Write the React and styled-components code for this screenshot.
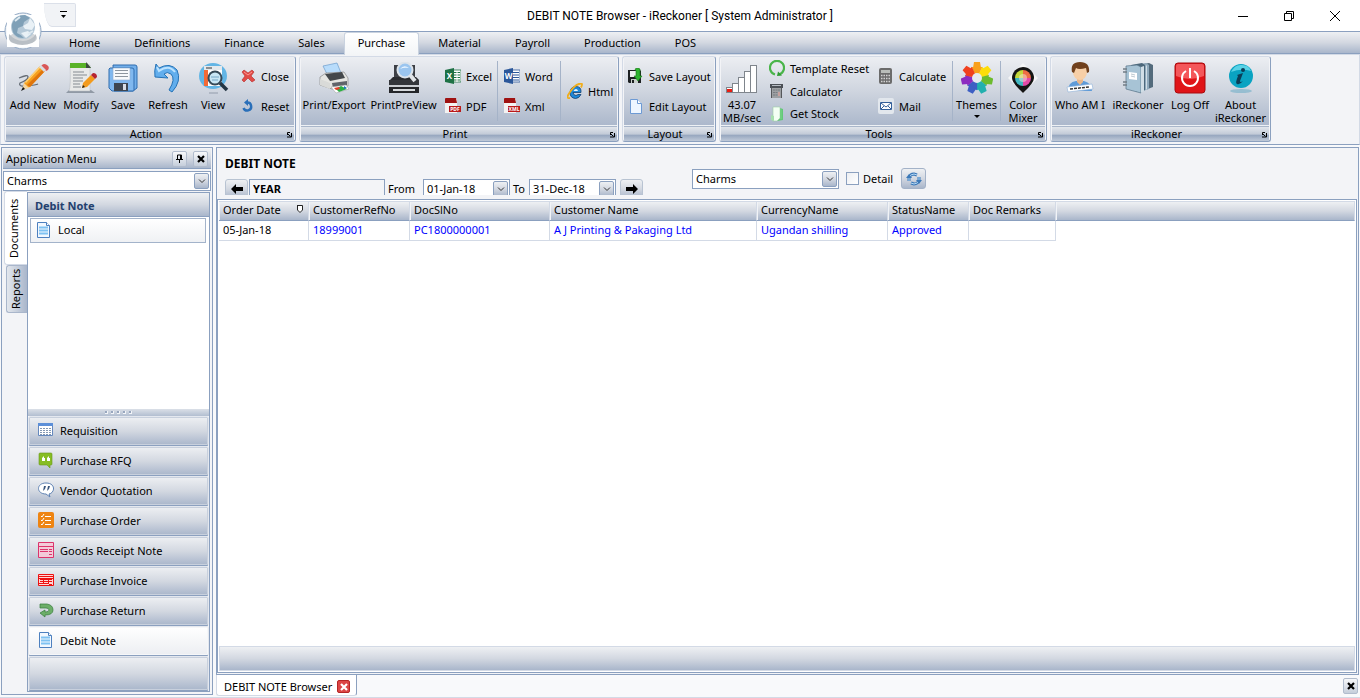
import React from 'react';
import styled, { createGlobalStyle } from 'styled-components';

const line = '#8ba0bf';
const soft = '#d3dae6';
const steel = 'linear-gradient(#eef0f3 0%, #d3d8e1 50%, #a9b6cb 100%)';

const GlobalStyle = createGlobalStyle`
	* {
		box-sizing: border-box;
	}
	html, body, #root {
		height: 100%;
	}
	body {
		margin: 0;
		background: #f8f9fb;
		color: #000;
		font: 11px/13px "Noto Sans", "Open Sans", sans-serif;
	}
	button, input, select {
		font: inherit;
		color: inherit;
		margin: 0;
		padding: 0;
	}
	button {
		background: none;
		border: 0;
		white-space: nowrap;
	}
	svg {
		display: block;
		flex: none;
	}
`

/* icons */

const Svg = ({ size = 16, box = 16, children }) => (
	<svg width={size} height={size} viewBox={`0 0 ${box} ${box}`} aria-hidden="true">{children}</svg>
)

const Big = ({ children }) => <Svg size={32} box={32}>{children}</Svg>

const GlobeLogo = () => (
	<Svg size={38} box={38}>
		<circle cx="19" cy="19" r="18" fill="#f4f7fa" stroke="#8fa6c2" />
		<rect x="3" y="3" width="32" height="32" fill="#fff" />
		<ellipse cx="19" cy="26" rx="14" ry="6" fill="#d3d6d9" />
		<path d="M5 22q-1 8 4 9 9 4 19 0 5-2 4-9-5 7-13 7T5 22z" fill="#b9bfc5" />
		<circle cx="19" cy="15" r="12" fill="#b5c9d8" />
		<path d="M8 12Q11 3 21 3l5 3-6 4-1 4-5 2-1 5q5 2 7 5Q7 26 8 12z" fill="#7fa0b7" />
		<path d="M26 6l5 7-3 5-7-1-2-3 5-3zM17 21l7-2 3 3-5 4z" fill="#e9f1f6" />
		<path d="M11 9l5-4M24 22l5-3" stroke="#dfeaf1" strokeWidth="2" />
	</Svg>
)

const PencilScribble = () => (
	<Big>
		<path d="M2 16q9-4 9-1T3 21q-2 4 7 3t11-2" fill="none" stroke="#666d76" strokeWidth="1.300" />
		<path d="M7 21L23 4l5 5-15 16-7 2z" fill="#f6a01f" />
		<path d="M10 23L26 7l2 2-15 16z" fill="#e0750c" />
		<path d="M8 20L23 4l1 1L9 21z" fill="#ffd073" />
		<path d="M25 3q2-2 5 0t1 5l-2 1-5-5z" fill="#d95757" />
		<path d="M22 5l2-2 5 5-2 2z" fill="#d9dde2" />
		<path d="M5 28l2-7 5 5z" fill="#f5d5a0" />
		<path d="M4 29l2-4 2 2z" fill="#111" />
	</Big>
)

const ModifyDoc = () => (
	<Big>
		<path d="M1 31h29l-4-3H4z" fill="#9099a5" />
		<path d="M5 3h20v26H4q2-5 1-26z" fill="#e8e9e8" stroke="#b4b9bf" strokeWidth=".5" />
		<path d="M5 1h17l4 5H5z" fill="#58b227" />
		<path d="M21 0l5 6h-5z" fill="#3c4940" />
		<path d="M8 10h11M8 13h14M8 16h10M8 19h10M8 22h7M8 25h8" stroke="#858b91" />
		<path d="M18 21l8-8 4 4-8 8-5 1z" fill="#f39b1d" />
		<path d="M26 13l2-2q4 0 4 4l-2 2z" fill="#b62431" />
		<path d="M17 26l1-3 2 2z" fill="#222" />
	</Big>
)

const Disks = () => (
	<Big>
		<path d="M6 3h22q2 0 2 2v21l-4 3H7z" fill="#72afea" stroke="#2f6caf" />
		<path d="M3 6h22q2 0 2 2v20q0 1-1 1H5l-3-3V7z" fill="#80b8ef" stroke="#2f6caf" />
		<path d="M6 6h17v12H6z" fill="#f8fafc" stroke="#8daccc" strokeWidth=".6" />
		<path d="M8 8.500h13M8 11.500h13M8 14.500h13" stroke="#8d969f" />
		<path d="M7 21h14v8H7z" fill="#3e4650" />
		<path d="M16 22h3v6h-3z" fill="#d7dde5" />
	</Big>
)

const BackArrow = () => (
	<Big>
		<path d="M4 2l3 4Q18 0 25 8q5 11-5 22l-3-2q7-11 2-16-4-3-7 0l4 4-13-1q-1-6 1-13z" fill="#62aeed" stroke="#2472b6" />
		<path d="M5 5l2 4q10-7 16 1" fill="none" stroke="#bce3ff" strokeWidth="2" />
	</Big>
)

const ViewLens = () => (
	<Big>
		<ellipse cx="16" cy="14" rx="14" ry="13" fill="#62b5e5" />
		<path d="M7 4h18v20H7z" fill="#fff" />
		<path d="M7 4h18v4H7z" fill="#e3e8ec" />
		<path d="M9 6h6" stroke="#333" />
		<path d="M7 8h4v16H7z" fill="#f26a36" />
		<path d="M12 11h12M12 22h8" stroke="#c9d2d9" />
		<circle cx="18" cy="16" r="6.500" fill="#c9e7f5" stroke="#344856" strokeWidth="2" />
		<path d="M14 15h8M15 18h6" stroke="#75a6c5" />
		<path d="M23 21l7 7" stroke="#233543" strokeWidth="3.500" />
		<path d="M12 31h9" stroke="#929cab" />
	</Big>
)

const RedCross = () => (
	<Svg>
		<path d="M2 4l2-2 4 3 4-3 2 2-3 4 4 4-3 2-4-4-4 4-2-2 3-4z" fill="#e14b47" stroke="#b62a28" strokeWidth=".6" />
		<path d="M4 4l4 3 4-3" stroke="#ff9791" fill="none" />
	</Svg>
)

const ResetIcon = () => (
	<Svg>
		<path d="M7 4.500a4 4 0 1 1-3.500 5.500" fill="none" stroke="#2a6fb9" strokeWidth="2.400" />
		<path d="M4 4.500L8 1v7z" fill="#2a6fb9" />
		<path d="M5 15.500h7" stroke="#b7c3d2" />
	</Svg>
)

const Printer = () => (
	<Big>
		<path d="M5 4l14-3 4 10-13 3z" fill="#b8dcfb" stroke="#6b9ccc" strokeWidth=".7" />
		<path d="M2 15l6-4 18-1 4 6v8l-16 3-12-4z" fill="#e5e5e2" stroke="#888" strokeWidth=".7" />
		<path d="M7 12l17-2 3 6-15 3z" fill="#44484b" />
		<path d="M2 17l10 4v6L2 23z" fill="#d9dad8" />
		<path d="M14 21l15-2v4l-14 3z" fill="#60646a" />
		<path d="M13 25l15-2 3 4-13 4z" fill="#fff" stroke="#999" strokeWidth=".5" />
		<path d="M18 27l5-3 6 3-8 3z" fill="#2dae45" />
		<path d="M16 26l5-1 1 2-4 1z" fill="#e3412d" />
		<path d="M26 24l3 2-3 1z" fill="#1a73c8" />
	</Big>
)

const PrinterLens = () => (
	<Big>
		<path d="M6 3h21v17H6z" fill="#3c3f45" />
		<path d="M2 18l3-3h23l3 3v11H2z" fill="#292b2f" />
		<path d="M1 18h30v5H1z" fill="#33363b" />
		<path d="M1 23h30v2H1z" fill="#c9cdd2" />
		<path d="M1 25h30v6H1z" fill="#24262a" />
		<path d="M5 28h22" stroke="#d5d9dc" strokeWidth="2" />
		<path d="M22 13l5 6" stroke="#e2e5e8" strokeWidth="4" />
		<circle cx="17" cy="8" r="7.500" fill="#9ac5ef" stroke="#dce3ea" strokeWidth="2" />
		<path d="M12 7q4-5 9-1-5-1-9 1z" fill="#e7f4ff" />
	</Big>
)

const OfficeIcon = ({ color, letter }) => (
	<Svg>
		<path d="M7 2h9v12H7z" fill="#fff" stroke={color} strokeWidth=".8" />
		<path d="M9 4.500h6M9 7h6M9 9.500h6M9 12h6" stroke={color} />
		{letter === 'X' && <path d="M12 3v11" stroke="#fff" />}
		<path d="M0 2l9-2v16l-9-2z" fill={color} />
		<text x="4.500" y="11" textAnchor="middle" fontSize="8" fontWeight="bold" fill="#fff">{letter}</text>
	</Svg>
)

const FileBadge = ({ text }) => (
	<Svg>
		<path d="M0 1h12v14H0z" fill="#f4f2f1" />
		<path d="M0 1q0-1 1-1h10l1 5H0z" fill="#9f1212" />
		<path d="M4 8h12v6H4z" fill="#ba1a1a" />
		<text x="10" y="13" textAnchor="middle" fontSize="5" fontWeight="bold" fill="#fff">{text}</text>
	</Svg>
)

const Explorer = () => (
	<Svg>
		<path d="M14 9.500H6q.5 3 3 3l2-1h3q-2 4-5.500 4Q3 15 3 9.500q.5-6 6-6 5.500 0 5 6z" fill="#1e88d8" stroke="#123f6e" strokeWidth=".8" />
		<path d="M6.500 8h4.500q-.5-2-2-2t-2.500 2z" fill="#e9f5ff" />
		<path d="M3 15Q-2 16 3 9 8 1 14 .500q2 0 0 4" fill="none" stroke="#f0ae1d" strokeWidth="1.800" />
	</Svg>
)

const SaveLayoutIcon = () => (
	<Svg>
		<path d="M0 2h12l1 1v12H1l-1-1z" fill="#1d2122" />
		<path d="M2 3h6v6H2z" fill="#eef3ef" />
		<path d="M3 11h7v4H3z" fill="#c8cfca" />
		<path d="M4 12h2v3H4z" fill="#1d2122" />
		<path d="M7 1q3-2 5 0v7h2l-4 5-4-5h2V3z" fill="#2fb62f" stroke="#167416" strokeWidth=".6" />
	</Svg>
)

const BlankPage = () => (
	<Svg>
		<path d="M2.500 1.500h7l4 4v10h-11z" fill="#eef6ff" stroke="#6d9ad4" />
		<path d="M9.500 1.500v4h4" fill="#fff" stroke="#6d9ad4" />
	</Svg>
)

const Signal = () => (
	<Big>
		{[[0, 25], [6, 21], [12, 15], [18, 9], [24, 3]].map(([x, y], i) => (
			<rect key={x} x={x + 0.5} y={y + 0.5} width="6" height={30 - y} fill={i ? '#fff' : '#ea1d12'} stroke="#7f858c" />
		))}
		<path d="M1 26h5v1H1z" fill="#fff" />
	</Big>
)

const GreenCycle = () => (
	<Svg>
		<path d="M6 14.500A7 7 0 1 1 10 14.500" fill="none" stroke="#4ab54a" strokeWidth="2.200" />
		<path d="M9 11.500l4 4-5 .500z" fill="#2f9b32" />
	</Svg>
)

const CalcSheet = () => (
	<Svg>
		<path d="M1 1h13v4H1z" fill="#4b5056" />
		<path d="M3 2.500h9" stroke="#b6bcc3" />
		<path d="M2 5h11v10H2z" fill="#9da0a3" />
		<path d="M2.500 5v10M12.500 5v10" stroke="#55585b" />
		<path d="M4 7h7M4 9.500h7M4 12h7" stroke="#777c81" strokeDasharray="2 .5" />
		<path d="M9 9h2v4H9z" fill="#c7a29f" />
	</Svg>
)

const StockIcon = () => (
	<Svg>
		<path d="M8 1l6 2v11l-6 1z" fill="#62c878" />
		<path d="M4 1h7v11l-3 3H4z" fill="#f3fff4" stroke="#9dd0a5" strokeWidth=".6" />
		<path d="M2 9l3 1v5l-3-1z" fill="#a7dfaf" />
		<path d="M11 3l2 1v9h-2z" fill="#6fcf80" />
	</Svg>
)

const CalcIcon = () => (
	<Svg>
		<rect x="1" y="0" width="13" height="16" rx="2" fill="#6b6b6b" />
		<path d="M3 2h9v3H3z" fill="#b9bdb9" />
		<path d="M3 7.500h9M3 10.500h9M3 13.500h9" stroke="#d1d1d1" strokeWidth="1.500" strokeDasharray="1.500 1" />
	</Svg>
)

const MailIcon = () => (
	<Svg>
		<rect width="16" height="16" rx="2" fill="#e2e7ed" />
		<path d="M2.500 4.500h11v7h-11z" fill="#fff" stroke="#35609a" />
		<path d="M3 5l5 4 5-4M3 11l3-3M13 11l-3-3" fill="none" stroke="#35609a" />
	</Svg>
)

const gearColors = ['#f9a01b', '#fddd0a', '#6cbb2d', '#22b0ae', '#3d5fc4', '#8c2cc0', '#f0401e']

const ThemesIcon = () => (
	<Big>
		{gearColors.map((c, i) => (
			<g key={c} transform={`rotate(${i * 360 / 7} 16 16)`} fill={c}>
				<path d="M16 16L10.500 5h11z" />
				<path d="M12 6l1-6h6l1 6z" />
			</g>
		))}
		<circle cx="16" cy="16" r="5" fill="#e6eaf0" />
	</Big>
)

const MixerIcon = () => (
	<Big>
		<path d="M16 1l15 15-15 15L1 16z" fill="#f5f6f7" />
		<path d="M16 31Q5 21 5 16a11 11 0 0 1 22 0q0 5-11 15z" fill="#141414" />
		<path d="M16 16V8a8 8 0 0 1 8 8z" fill="#ee6e44" />
		<path d="M16 16h8a8 8 0 0 1-8 8z" fill="#e24ba7" />
		<path d="M16 16v8a8 8 0 0 1-8-8z" fill="#41b7c0" />
		<path d="M16 16H8a8 8 0 0 1 8-8z" fill="#c4d83c" />
		<circle cx="16" cy="16" r="4" fill="#f6eadb" opacity=".5" />
	</Big>
)

const PersonIcon = () => (
	<Big>
		<path d="M4 29q0-9 8-10h8q8 2 8 10z" fill="#5f9bd8" />
		<path d="M13 16h6v4l-3 3-3-3z" fill="#eab78b" />
		<ellipse cx="16" cy="10" rx="7" ry="8" fill="#f7cfa7" />
		<path d="M8 10Q6 0 16 0t9 10l-2 1-1-5q-7 2-10 0l-2 5z" fill="#70401d" />
		<path d="M3 25l25-3 1 5-25 3z" fill="#fff" stroke="#8eb2d8" strokeWidth=".6" />
		<path d="M6 27l19-2" stroke="#333" strokeWidth="1.500" strokeDasharray="3 1" />
	</Big>
)

const BooksIcon = () => (
	<Big>
		<path d="M16 3l11-2 4 2v22l-13 5z" fill="#536b7c" />
		<path d="M13 3l11-2 3 2v24l-9 3z" fill="#8fa9bb" />
		<path d="M9 3l11-2 3 2v25l-9 2z" fill="#4d687b" />
		<path d="M4 4l11-1 4 2v26L4 27z" fill="#a7c3d5" stroke="#567288" strokeWidth=".7" />
		<path d="M19 5v26l3-2V4zM24 4v24l1-1V3z" fill="#d1dee6" />
		<path d="M7 10l8 1v7l-8-1z" fill="#fff" />
		<path d="M9 12l4 1M9 14l4 1" stroke="#8ea2b0" strokeWidth=".6" />
		<path d="M1 7h4M1 10h4M1 20h4M1 23h4" stroke="#717d86" strokeWidth="1.500" />
	</Big>
)

const PowerIcon = () => (
	<Big>
		<rect x="1" y="1" width="30" height="30" rx="3" fill="#e01418" stroke="#a90b0e" />
		<path d="M2 4q0-2 2-2h24q2 0 2 2v10Q16 20 2 14z" fill="#f4575a" />
		<path d="M12 9a8 8 0 1 0 8 0M16 6v10" fill="none" stroke="#fff" strokeWidth="2" />
	</Big>
)

const AboutIcon = () => (
	<Big>
		<ellipse cx="16" cy="29" rx="11" ry="2" fill="#7fb3cb" opacity=".7" />
		<circle cx="16" cy="14" r="12" fill="#0aa3c2" />
		<path d="M6 10q4-8 11-7 7 0 9 6-10-3-20 1z" fill="#5ad2e6" />
		<circle cx="18" cy="8" r="2" fill="#0b3e57" />
		<path d="M12 13l6-2-3 8q0 2 3 0-3 4-6 3-2-1 1-8z" fill="#0b3e57" />
	</Big>
)

const PageIcon = () => (
	<Svg>
		<path d="M1.500.500h9l3 3v12h-12z" fill="#f2f8ff" stroke="#4d80bf" />
		<path d="M10.500.500v3h3" fill="#fff" stroke="#4d80bf" />
		<path d="M3 5.500h9M3 8.500h9M3 11.500h9" stroke="#7fc2f2" strokeWidth="2" />
	</Svg>
)

const GridIcon = () => (
	<Svg>
		<path d="M.500 1.500h14v12H.500z" fill="#fff" stroke="#6588bd" />
		<path d="M0 1h15v3H0z" fill="#5c8fd8" />
		<path d="M2 6.500h11M2 8.500h11M2 10.500h11M2 12.500h11" stroke="#8498b3" strokeDasharray="2 1" />
	</Svg>
)

const RfqIcon = () => (
	<Svg>
		<path d="M2 1h11q1 0 1 1v10q0 1-1 1h-1v3l-3-3H2q-1 0-1-1V2q0-1 1-1z" fill="#87bd24" stroke="#6a981b" strokeWidth=".6" />
		<path d="M4 9V6l2-2v2h1v3zM9 9V6l2-2v2h1v3z" fill="#fff" />
	</Svg>
)

const QuoteIcon = () => (
	<Svg>
		<path d="M8 1c10 0 9 10 3 11l1 3-4-3C-2 12-2 1 8 1z" fill="#fff" stroke="#5f82b3" />
		<path d="M6 4h2L7 7 5 9zM10 4h2l-1 3-2 2z" fill="#39557c" />
	</Svg>
)

const OrderIcon = () => (
	<Svg>
		<rect width="16" height="16" rx="2" fill="#ee8412" />
		<path d="M3 4l1 1 2-3M3 8l1 1 2-3M3 12l1 1 2-3M7 4.500h6M7 8.500h6M7 12.500h6" fill="none" stroke="#fff" />
	</Svg>
)

const ReceiptIcon = ({ color, full }) => (
	<Svg>
		<path d={full ? 'M.5 2.500h15v11H.500z' : 'M.5.500h15v15H.500z'} fill={full ? '#ffd5d5' : '#f3cbd9'} stroke={color} />
		<path d="M0 4.500h16M2 7.500h8M11 7.500h3M2 9.500h8M11 9.500h3M11 12.500h3" stroke={color} />
		{full && <path d="M0 6.500h16M0 11.500h10M5.500 6v6M10.500 6v6" stroke={color} />}
	</Svg>
)

const ReturnIcon = () => (
	<Svg>
		<path d="M2 2h7q6 1 6 6t-8 5v2l-5-4 5-3v2q4 0 4-2t-3-2H2z" fill="#6cae69" stroke="#357b3a" strokeWidth=".7" />
	</Svg>
)

const SyncIcon = () => (
	<Svg>
		<path d="M3 10V7q1-4 5-4l3 1M13 6v3q-1 4-5 4l-3-1" fill="none" stroke="#3b78b8" strokeWidth="3" />
		<path d="M3 10V7q1-4 5-4l3 1M13 6v3q-1 4-5 4l-3-1" fill="none" stroke="#b7daf5" />
		<path d="M0 7h6L3 3zM10 9h6l-3 4z" fill="#3b78b8" />
	</Svg>
)

const Arrow = ({ flip }) => (
	<Svg size={12} box={12}>
		<path d="M0 6l5-5v3h7v4H5v3z" fill="#000" transform={flip ? 'rotate(180 6 6)' : undefined} />
	</Svg>
)

const Cross = ({ color = '#000' }) => (
	<Svg size={8} box={8}><path d="M1 1l6 6M7 1L1 7" stroke={color} strokeWidth="2.200" /></Svg>
)

const PinIcon = () => (
	<Svg size={9} box={9}><path d="M2.500 5V1h4v4M1 5.500h7M4.500 6v3M5.500 1v4" fill="none" stroke="#000" /></Svg>
)

const Chevron = () => (
	<Svg size={8} box={8}><path d="M1 2.500l3 3 3-3" fill="none" stroke="#333" /></Svg>
)

const Launcher = () => (
	<Svg size={8} box={8}><path d="M1 3l3.500 3.500M5.500 3v4H1M1.500 5V2.500H4" fill="none" stroke="#000" /></Svg>
)

/* window frame */

const Window = styled.div`
	min-height: 100%;
	display: flex;
	flex-direction: column;
`

const TitleBar = styled.header`
	position: relative;
	height: 31px;
	background: #fff;
	display: flex;
	align-items: center;
`

const Logo = styled.div`
	position: absolute;
	left: 4px;
	top: 12px;
	z-index: 2;
`

const QuickAccess = styled.button`
	align-self: flex-start;
	margin: 3px 0 0 44px;
	width: 32px;
	height: 24px;
	padding-left: 8px;
	display: flex;
	align-items: center;
	justify-content: center;
	background: #f1f3f6;
	border: 1px solid #dbe0e9;
	border-left: 0;
	border-top-right-radius: 2px;
	border-bottom-left-radius: 8px 24px;
`

const Title = styled.h1`
	position: absolute;
	left: 0;
	right: 0;
	margin: 0;
	text-align: center;
	font-family: Roboto, sans-serif;
	font-size: 12px;
	line-height: 16px;
	font-weight: 400;
	pointer-events: none;
`

const WindowButtons = styled.div`
	margin: 0 2px 0 auto;
	display: flex;
`

const WindowButton = styled.button`
	width: 46px;
	height: 28px;
	display: flex;
	align-items: center;
	justify-content: center;
`

const MenuBar = styled.nav`
	height: 23px;
	padding-left: 52px;
	display: flex;
	background: ${steel};
	border-top: 1px solid ${line};
	border-bottom: 1px solid ${line};
`

const MenuTab = styled.button`
	margin: 0 2px;
	height: 21px;
	padding: 0 14px;
	border: 1px solid transparent;
	${props => props.$active && `
		height: 23px;
		padding: 0 13px 3px;
		background: linear-gradient(#fff, #f3f5f7);
		border-color: #c9d2df;
		border-bottom: 0;
		border-radius: 3px 3px 0 0;
		z-index: 1;
	`}
`

/* ribbon */

const Ribbon = styled.section`
	padding: 1px 3px 2px;
	display: flex;
	gap: 3px;
	background: #f3f4f7;
	border: 1px solid ${soft};
	border-bottom: 1px solid ${line};
`

const Group = styled.section`
	display: flex;
	flex-direction: column;
	height: 86px;
	border: 1px solid ${soft};
	border-right-color: ${line};
	border-bottom-color: ${line};
	border-radius: 3px;
	padding: 0 1px;
`

const GroupBody = styled.div`
	display: flex;
	height: 69px;
	background: linear-gradient(#eceef2, #cfd5df 50%, #acb8cc);
	border-bottom: 1px solid #eef1f5;
`

const GroupCaption = styled.h2`
	margin: 0;
	padding-bottom: 1px;
	flex: 1;
	display: flex;
	align-items: center;
	font-size: 11px;
	line-height: 13px;
	font-weight: 400;
	background: linear-gradient(#e2e6ec, #c3cbd8 50%, #98a8c0 60%, #bfc9d8);
	border-top: 1px solid #a9b6ca;
	span {
		flex: 1;
		text-align: center;
	}
`

const BigButton = styled.button`
	width: ${props => props.$w}px;
	display: flex;
	flex-direction: column;
	align-items: center;
	padding-top: 5px;
	white-space: pre;
	svg + span {
		margin-top: 4px;
	}
`

const SmallColumn = styled.div`
	width: ${props => props.$w}px;
	padding-left: ${props => props.$pad || 6}px;
	display: flex;
	flex-direction: column;
	justify-content: center;
	gap: ${props => props.$tight ? 0 : 7}px;
`

const SmallButton = styled.button`
	height: 23px;
	display: flex;
	align-items: center;
	gap: 5px;
`

const Divider = styled.div`
	width: 1px;
	margin: 4px 0;
	background: #a5b3c8;
`

/* work area */

const Workspace = styled.main`
	flex: 1;
	display: flex;
	gap: 3px;
	padding: 2px 1px 1px;
	border-bottom: 1px solid ${soft};
`

const Dock = styled.aside`
	width: 212px;
	margin-bottom: 1px;
	padding: 1px;
	display: flex;
	flex-direction: column;
	background: #f3f4f7;
	border: 1px solid ${line};
`

const DockHeader = styled.div`
	height: 20px;
	padding: 0 3px;
	display: flex;
	align-items: center;
	gap: 6px;
	background: ${steel};
	border-bottom: 1px solid ${line};
	h2 {
		flex: 1;
		margin: 0;
		font-size: 11px;
		line-height: 13px;
		font-weight: 400;
	}
`

const TinyButton = styled.button`
	width: 15px;
	height: 16px;
	display: flex;
	align-items: center;
	justify-content: center;
	background: linear-gradient(#f7f8fa, #c5cedb);
	border: 1px solid #b1bccd;
	border-radius: 2px;
`

const Combo = styled.div`
	position: relative;
	width: ${props => props.$w || 'auto'};
	height: 20px;
	margin: ${props => props.$m || '0'};
	background: #fff;
	border: 1px solid ${line};
	select, input {
		appearance: none;
		display: block;
		width: 100%;
		height: 18px;
		padding: 0 0 1px 3px;
		border: 0;
		outline: 0;
		background: none;
	}
`

const ComboArrow = styled.span`
	position: absolute;
	top: 1px;
	right: 1px;
	width: 15px;
	height: 16px;
	display: flex;
	align-items: center;
	justify-content: center;
	background: ${steel};
	border: 1px solid ${line};
	border-radius: 2px;
	pointer-events: none;
`

const DockBody = styled.div`
	flex: 1;
	display: flex;
`

const SideTabs = styled.div`
	width: 24px;
	display: flex;
	flex-direction: column;
	align-items: flex-end;
`

const SideTab = styled.button`
	writing-mode: vertical-rl;
	transform: rotate(180deg);
	width: ${props => props.$active ? '23px' : '21px'};
	height: ${props => props.$active ? '74px' : '48px'};
	padding-left: ${props => props.$active ? '5px' : '3px'};
	background: ${props => props.$active ? '#fff' : 'linear-gradient(to left, #e3e7ed, #a9b6cb)'};
	border: 1px solid ${props => props.$active ? soft : '#a9b6cb'};
	border-left: 0;
	border-radius: 0 3px 3px 0;
`

const Navigator = styled.div`
	flex: 1;
	margin: 1px 1px 1px 0;
	display: flex;
	flex-direction: column;
	background: #fff;
	border: 1px solid ${line};
`

const NavTitle = styled.h3`
	margin: 0;
	padding: 6px 7px 3px;
	font-size: 11px;
	line-height: 14px;
	color: #23406e;
	background: ${steel};
	border-bottom: 1px solid ${line};
`

const NavPane = styled.div`
	flex: 1;
	padding: 1px 2px;
`

const NavLocal = styled.button`
	width: calc(100% - 1px);
	height: 25px;
	padding: 0 0 2px 5px;
	display: flex;
	align-items: center;
	gap: 6px;
	background: linear-gradient(#fff, #eff1f4);
	border: 1px solid #a3b3ca;
`

const Splitter = styled.div`
	height: 7px;
	display: flex;
	align-items: center;
	justify-content: center;
	gap: 3px;
	background: linear-gradient(#dbe0e8, #b2bed0);
	i {
		width: 3px;
		height: 3px;
		border: 1px solid #f3f5f8;
		border-width: 0 1px 1px 0;
		background: #97a6be;
	}
`

const NavItem = styled.button`
	width: 100%;
	height: ${props => props.$last ? '35px' : '30px'};
	padding: 0 0 2px 9px;
	display: flex;
	align-items: center;
	gap: 6px;
	background: ${props => props.$active ? 'linear-gradient(#fff, #eceef2)' : steel};
	border: 1px solid #e4e8ef;
	border-bottom-color: ${line};
	box-shadow: inset 0 0 0 1px ${props => props.$active ? '#f6f7f9' : '#c8d0dd'};
	border-radius: 2px;
`

const Content = styled.div`
	flex: 1;
	min-width: 0;
	display: flex;
	flex-direction: column;
`

const Document = styled.section`
	flex: 1;
	display: flex;
	flex-direction: column;
	background: #f3f4f7;
	border: 1px solid ${line};
`

const FilterBar = styled.div`
	display: flex;
	align-items: center;
	height: 51px;
	padding-left: 8px;
`

const YearFilter = styled.div`
	width: 467px;
	height: 47px;
	padding-top: 9px;
	margin-bottom: 4px;
	h2 {
		margin: 0 0 8px;
		font-size: 12px;
		line-height: 14px;
	}
`

const YearRow = styled.div`
	height: 16px;
	overflow: hidden;
	display: flex;
	align-items: flex-start;
	label {
		line-height: 20px;
	}
`

const StepButton = styled.button`
	width: 23px;
	height: 20px;
	margin-right: 1px;
	display: flex;
	align-items: center;
	justify-content: center;
	background: ${steel};
	border: 1px solid #b8c3d2;
	border-radius: 3px;
`

const YearInput = styled.input`
	width: 136px;
	height: 20px;
	padding: 0 0 1px 3px;
	font-weight: 700;
	background: #f3f4f7;
	border: 1px solid ${line};
`

const DateLabel = styled.label`
	width: ${props => props.$w}px;
	padding-left: 3px;
`

const BranchFilter = styled.div`
	flex: 1;
	display: flex;
	align-items: center;
	padding-top: 10px;
`

const Check = styled.label`
	display: flex;
	align-items: center;
	gap: 4px;
	margin: 0 8px 0 7px;
	input {
		appearance: none;
		width: 13px;
		height: 13px;
		background: linear-gradient(135deg, #eceef2, #fff);
		border: 1px solid ${line};
	}
`

const SyncButton = styled.button`
	width: 25px;
	height: 21px;
	display: flex;
	align-items: center;
	justify-content: center;
	background: ${steel};
	border: 1px solid #a3b2c8;
	border-radius: 3px;
`

const GridFrame = styled.div`
	flex: 1;
	display: flex;
	flex-direction: column;
	margin: 0 1px 1px 0;
	padding: 1px;
	background: #fff;
	border: 1px solid ${line};
`

const Grid = styled.table`
	width: 100%;
	table-layout: fixed;
	border-collapse: separate;
	border-spacing: 0;
	th {
		height: 20px;
		padding: 0 4px 4px;
		text-align: left;
		font-weight: 400;
		background: ${steel};
		border-top: 1px solid ${soft};
		border-right: 1px solid ${soft};
		border-bottom: 1px solid ${line};
		box-shadow: inset 1px 0 #f1f3f6;
	}
	td {
		height: 20px;
		padding: 0 4px 3px;
		color: #00f;
		border-right: 1px solid ${soft};
		border-bottom: 1px solid ${soft};
	}
	td:first-child {
		color: #000;
	}
	td:last-child {
		border: 0;
	}
`

const SortHead = styled.div`
	display: flex;
	align-items: center;
	justify-content: space-between;
`

const GridFooter = styled.div`
	height: 25px;
	margin-top: auto;
	background: ${steel};
	border: 1px solid ${soft};
`

const DocTabs = styled.div`
	height: 21px;
	padding-right: 1px;
	display: flex;
	align-items: center;
	justify-content: space-between;
`

const DocTab = styled.div`
	width: 141px;
	height: 21px;
	padding: 3px 0 0 7px;
	display: flex;
	align-items: center;
	gap: 5px;
	background: #fff;
	border: 1px solid ${soft};
	border-top: 0;
	border-right-color: ${line};
	border-radius: 0 0 3px 3px;
`

const CloseTab = styled.button`
	width: 13px;
	height: 13px;
	display: flex;
	align-items: center;
	justify-content: center;
	background: #dc4545;
	border: 1px solid #b52525;
	border-radius: 2px;
`

const menus = ['Home', 'Definitions', 'Finance', 'Sales', 'Purchase', 'Material', 'Payroll', 'Production', 'POS']

const navItems = [
	['Requisition', <GridIcon />],
	['Purchase RFQ', <RfqIcon />],
	['Vendor Quotation', <QuoteIcon />],
	['Purchase Order', <OrderIcon />],
	['Goods Receipt Note', <ReceiptIcon color="#dc346c" />],
	['Purchase Invoice', <ReceiptIcon color="#ed1111" full />],
	['Purchase Return', <ReturnIcon />],
	['Debit Note', <PageIcon />],
]

const columns = [
	['Order Date', 90, '05-Jan-18'],
	['CustomerRefNo', 101, '18999001'],
	['DocSlNo', 140, 'PC1800000001'],
	['Customer Name', 207, 'A J Printing & Pakaging Ltd'],
	['CurrencyName', 131, 'Ugandan shilling'],
	['StatusName', 81, 'Approved'],
	['Doc Remarks', 87, ''],
]

const RibbonGroup = ({ title, children }) => (
	<Group>
		<GroupBody>{children}</GroupBody>
		<GroupCaption><span>{title}</span><Launcher /></GroupCaption>
	</Group>
)

const BigItem = ({ w, icon, label, children }) => (
	<BigButton type="button" $w={w}>{icon}<span>{label}</span>{children}</BigButton>
)

const SmallItem = ({ icon, label }) => (
	<SmallButton type="button">{icon}<span>{label}</span></SmallButton>
)

const DateBox = ({ id, value }) => (
	<Combo $w="87px">
		<input id={id} type="text" defaultValue={value} />
		<ComboArrow><Chevron /></ComboArrow>
	</Combo>
)

const App = () => (
	<Window>
		<GlobalStyle />
		<TitleBar>
			<Logo><GlobeLogo /></Logo>
			<QuickAccess type="button" aria-label="Quick access">
				<Svg size={8} box={8}><path d="M0 .500h7" stroke="#000" /><path d="M1 4h5L3.500 7z" /></Svg>
			</QuickAccess>
			<Title>DEBIT NOTE Browser - iReckoner [ System Administrator ]</Title>
			<WindowButtons>
				<WindowButton type="button" aria-label="Minimize">
					<Svg size={10} box={10}><path d="M0 5.500h10" stroke="#000" /></Svg>
				</WindowButton>
				<WindowButton type="button" aria-label="Restore">
					<Svg size={10} box={10}><path d="M.5 2.500h7v7h-7zM2.500 2.500v-2h7v7h-2" fill="none" stroke="#000" /></Svg>
				</WindowButton>
				<WindowButton type="button" aria-label="Close window">
					<Svg size={10} box={10}><path d="M0 0l10 10M10 0L0 10" stroke="#000" /></Svg>
				</WindowButton>
			</WindowButtons>
		</TitleBar>
		<MenuBar>
			{menus.map(m => <MenuTab key={m} type="button" $active={m === 'Purchase'}>{m}</MenuTab>)}
		</MenuBar>
		<Ribbon>
			<RibbonGroup title="Action">
				<BigItem w={54} icon={<PencilScribble />} label="Add New" />
				<BigItem w={42} icon={<ModifyDoc />} label="Modify" />
				<BigItem w={42} icon={<Disks />} label="Save" />
				<BigItem w={48} icon={<BackArrow />} label="Refresh" />
				<BigItem w={42} icon={<ViewLens />} label="View" />
				<SmallColumn $w={60}>
					<SmallItem icon={<RedCross />} label="Close" />
					<SmallItem icon={<ResetIcon />} label="Reset" />
				</SmallColumn>
			</RibbonGroup>
			<RibbonGroup title="Print">
				<BigItem w={66} icon={<Printer />} label="Print/Export" />
				<BigItem w={73} icon={<PrinterLens />} label="PrintPreView" />
				<SmallColumn $w={57} $pad={5}>
					<SmallItem icon={<OfficeIcon color="#1e7145" letter="X" />} label="Excel" />
					<SmallItem icon={<FileBadge text="PDF" />} label="PDF" />
				</SmallColumn>
				<Divider />
				<SmallColumn $w={62}>
					<SmallItem icon={<OfficeIcon color="#2b579a" letter="W" />} label="Word" />
					<SmallItem icon={<FileBadge text="XML" />} label="Xml" />
				</SmallColumn>
				<Divider />
				<SmallColumn $w={56}>
					<SmallItem icon={<Explorer />} label="Html" />
				</SmallColumn>
			</RibbonGroup>
			<RibbonGroup title="Layout">
				<SmallColumn $w={90} $pad={4}>
					<SmallItem icon={<SaveLayoutIcon />} label="Save Layout" />
					<SmallItem icon={<BlankPage />} label="Edit Layout" />
				</SmallColumn>
			</RibbonGroup>
			<RibbonGroup title="Tools">
				<BigItem w={42} icon={<Signal />} label={'43.07\nMB/sec'} />
				<SmallColumn $w={109} $tight>
					<SmallItem icon={<GreenCycle />} label="Template Reset" />
					<SmallItem icon={<CalcSheet />} label="Calculator" />
					<SmallItem icon={<StockIcon />} label="Get Stock" />
				</SmallColumn>
				<SmallColumn $w={80}>
					<SmallItem icon={<CalcIcon />} label="Calculate" />
					<SmallItem icon={<MailIcon />} label="Mail" />
				</SmallColumn>
				<Divider />
				<BigItem w={47} icon={<ThemesIcon />} label="Themes">
					<Svg size={12} box={12}><path d="M3 4h6L6 7z" /></Svg>
				</BigItem>
				<Divider />
				<BigItem w={44} icon={<MixerIcon />} label={'Color\nMixer'} />
			</RibbonGroup>
			<RibbonGroup title="iReckoner">
				<BigItem w={56} icon={<PersonIcon />} label="Who AM I" />
				<BigItem w={60} icon={<BooksIcon />} label="iReckoner" />
				<BigItem w={44} icon={<PowerIcon />} label="Log Off" />
				<BigItem w={57} icon={<AboutIcon />} label={'About\niReckoner'} />
			</RibbonGroup>
		</Ribbon>
		<Workspace>
			<Dock>
				<DockHeader>
					<h2>Application Menu</h2>
					<TinyButton type="button" aria-label="Pin"><PinIcon /></TinyButton>
					<TinyButton type="button" aria-label="Close panel"><Cross /></TinyButton>
				</DockHeader>
				<Combo $m="2px 0 0">
					<select aria-label="Company"><option>Charms</option></select>
					<ComboArrow><Chevron /></ComboArrow>
				</Combo>
				<DockBody>
					<SideTabs>
						<SideTab type="button" $active>Documents</SideTab>
						<SideTab type="button">Reports</SideTab>
					</SideTabs>
					<Navigator>
						<NavTitle>Debit Note</NavTitle>
						<NavPane>
							<NavLocal type="button"><PageIcon />Local</NavLocal>
						</NavPane>
						<Splitter><i /><i /><i /><i /><i /></Splitter>
						{navItems.map(([label, icon]) => (
							<NavItem key={label} type="button" $active={label === 'Debit Note'}>{icon}{label}</NavItem>
						))}
						<NavItem as="div" $last />
					</Navigator>
				</DockBody>
			</Dock>
			<Content>
				<Document>
					<FilterBar>
						<YearFilter>
							<h2>DEBIT NOTE</h2>
							<YearRow>
								<StepButton type="button" aria-label="Previous"><Arrow /></StepButton>
								<YearInput aria-label="Period" defaultValue="YEAR" />
								<DateLabel htmlFor="from" $w={38}>From</DateLabel>
								<DateBox id="from" value="01-Jan-18" />
								<DateLabel htmlFor="to" $w={19}>To</DateLabel>
								<DateBox id="to" value="31-Dec-18" />
								<DateLabel as="span" $w={4} />
								<StepButton type="button" aria-label="Next"><Arrow flip /></StepButton>
							</YearRow>
						</YearFilter>
						<BranchFilter>
							<Combo $w="147px">
								<select aria-label="Branch"><option>Charms</option></select>
								<ComboArrow><Chevron /></ComboArrow>
							</Combo>
							<Check><input type="checkbox" />Detail</Check>
							<SyncButton type="button" aria-label="Reload"><SyncIcon /></SyncButton>
						</BranchFilter>
					</FilterBar>
					<GridFrame>
						<Grid>
							<colgroup>
								{columns.map(([name, w]) => <col key={name} width={w} />)}
								<col />
							</colgroup>
							<thead>
								<tr>
									{columns.map(([name], i) => (
										<th key={name}>
											{i === 0 ? (
												<SortHead>{name}
													<Svg size={8} box={8}><path d="M1.500 0v5l2.500 2.500L6.500 5V.500h-5" fill="#fff" stroke="#222" /></Svg>
												</SortHead>
											) : name}
										</th>
									))}
									<th />
								</tr>
							</thead>
							<tbody>
								<tr>
									{columns.map(([name, , value]) => <td key={name}>{value}</td>)}
									<td />
								</tr>
							</tbody>
						</Grid>
						<GridFooter />
					</GridFrame>
				</Document>
				<DocTabs>
					<DocTab>DEBIT NOTE Browser
						<CloseTab type="button" aria-label="Close document"><Cross color="#fff" /></CloseTab>
					</DocTab>
					<TinyButton type="button" aria-label="Close all"><Cross /></TinyButton>
				</DocTabs>
			</Content>
		</Workspace>
	</Window>
)

export default App;
